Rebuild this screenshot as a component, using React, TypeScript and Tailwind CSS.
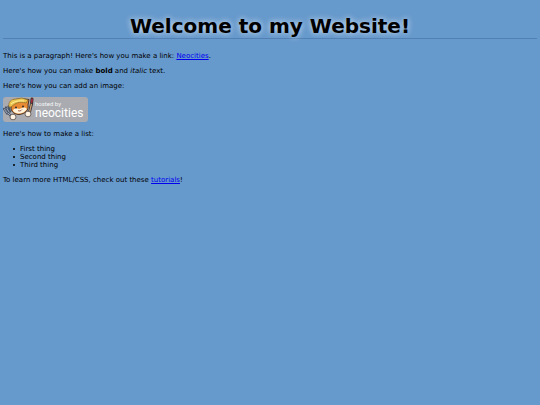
function HostedBadge() {
  return (
    <svg viewBox="0 0 85 26" className="h-[26px] w-[85px]" role="img" aria-label="Hosted by Neocities">
      <rect width="85" height="25" rx="3" fill="#a9abb0" />
      {/* fork */}
      <g fill="none" strokeLinecap="round" strokeLinejoin="round">
        <path d="M1 12 4 16.5M3 10.5 5.5 15M5.5 9.5 7 14.5M4.5 15.5 9 20" stroke="#4b5568" strokeWidth="2.2" />
        <path d="M1.5 12.5 4 16M4 11.5 6 15M5 16 9 20" stroke="#a5b2c4" strokeWidth="0.9" />
      </g>
      {/* brush */}
      <g fill="none" strokeLinecap="round">
        <path d="M29 2 28.5 7 26 17" stroke="#3a3232" strokeWidth="3" />
        <path d="M28.3 7.5 26.3 16" stroke="#cfa070" strokeWidth="1.3" />
        <path d="M29 2.5 28.7 5" stroke="#a52b3b" strokeWidth="1.8" />
      </g>
      {/* head */}
      <path
        d="M7 8 10 3 15 2 22 2 26 2.5 25 8C26 13 22 17 16 17.5 10 17 8 14 8 10Z"
        fill="#e88b32"
        stroke="#4a3428"
        strokeWidth="1"
      />
      <path d="M10 13C12 11 14 11 16 12L19 11C22 10 23 11 24 12 22 15 19 16.5 16 16.5 13 16.5 10 15 10 13Z" fill="#fff2db" />
      <path d="M6 10C5 5 8 2 13 2L19 1 25 3 23 6C17 4 12 6 8 10Z" fill="#edc650" stroke="#8a6a2c" strokeWidth="0.7" />
      <path d="M8 7C12 4 16 3.5 21 4" fill="none" stroke="#fff0a0" strokeWidth="1" />
      <circle cx="13" cy="10.5" r="0.9" fill="#252329" />
      <circle cx="20" cy="9.5" r="0.9" fill="#252329" />
      <path d="M15 13.5C16 14.5 18 14 19 12.5" fill="none" stroke="#87412c" strokeWidth="0.8" />
      {/* paws */}
      <ellipse cx="10" cy="20" rx="3" ry="2.8" fill="#fff3e4" stroke="#5a4c48" strokeWidth="0.8" />
      <ellipse cx="25" cy="17" rx="3" ry="2.8" fill="#fff3e4" stroke="#5a4c48" strokeWidth="0.8" />
      <text x="32" y="9" fill="#f4f5f7" fontSize="6" fontFamily="Roboto, sans-serif">
        hosted by
      </text>
      <text x="32" y="20" fill="#ffffff" fontSize="12" fontFamily="Roboto, sans-serif">
        neocities
      </text>
    </svg>
  );
}

const ITEMS = ["First thing", "Second thing", "Third thing"];

export default function App() {
  return (
    <main className="min-h-screen bg-[#6699cc] px-[3px] pt-[14px] font-['DejaVu_Sans',sans-serif] text-[7px] leading-[8px] text-black">
      <h1 className="border-b border-[#5280b3] text-center text-[20px] leading-[24px] font-bold [text-shadow:0_0_6px_#ffffffcc]">
        Welcome to my Website!
      </h1>

      <div className="mt-[13px] space-y-[7px]">
        <p>
          This is a paragraph! Here's how you make a link:{" "}
          <a href="https://neocities.org" className="text-[#0000ee] underline">
            Neocities
          </a>
          .
        </p>
        <p>
          Here's how you can make <strong>bold</strong> and <em>italic</em> text.
        </p>
        <p>Here's how you can add an image:</p>
        <HostedBadge />
        <p>Here's how to make a list:</p>
        <ul>
          {ITEMS.map((item) => (
            <li
              key={item}
              className="flex items-center gap-[5px] pl-[10px] before:size-[2px] before:rounded-full before:bg-black"
            >
              {item}
            </li>
          ))}
        </ul>
        <p>
          To learn more HTML/CSS, check out these{" "}
          <a href="https://neocities.org/tutorials" className="text-[#0000ee] underline">
            tutorials
          </a>
          !
        </p>
      </div>
    </main>
  );
}
